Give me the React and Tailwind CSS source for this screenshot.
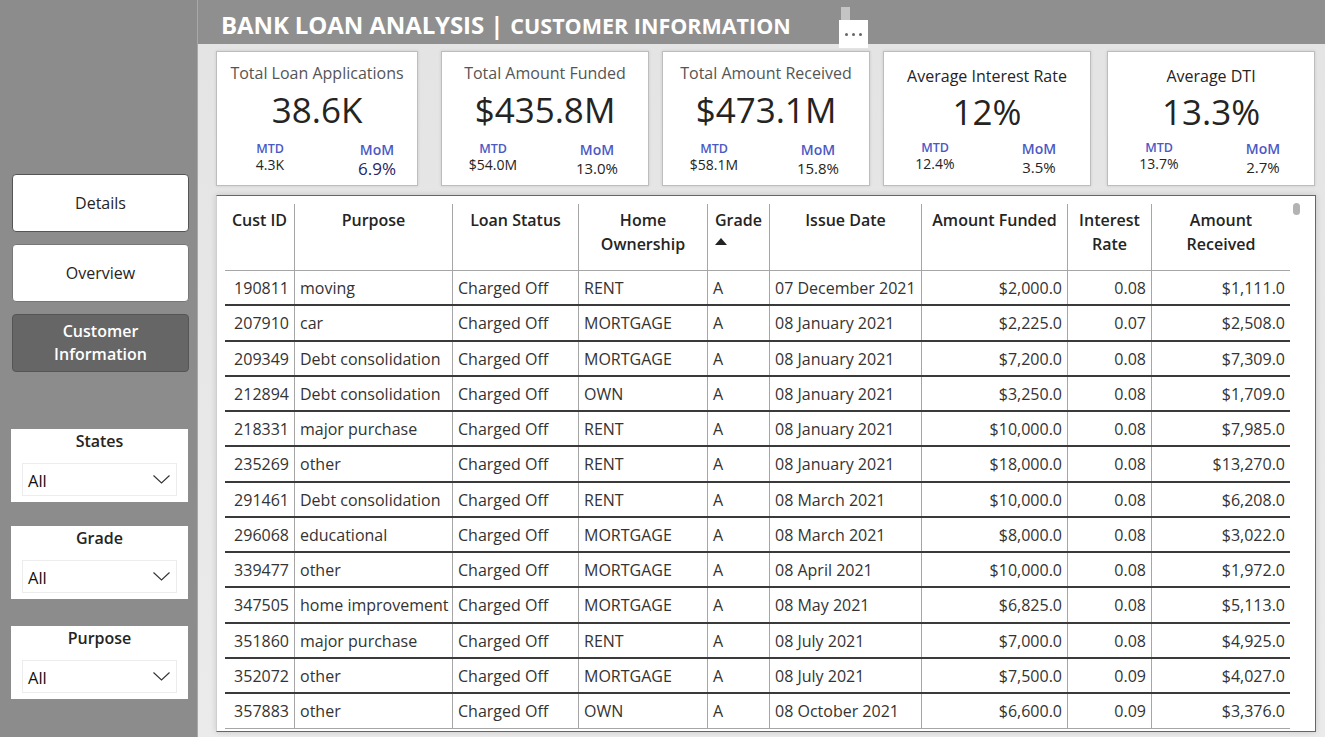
import React from 'react';

const font = { fontFamily: '"Open Sans", "Noto Sans", sans-serif' };

const kpis = [
  { title: 'Total Loan Applications', value: '38.6K', mtd: '4.3K', mom: '6.9%', w: 'w-[202px]', ml: 'ml-0', px: 'pl-[24px] pr-[11px]', titleColor: 'text-[#555555]', momBig: true },
  { title: 'Total Amount Funded', value: '$435.8M', mtd: '$54.0M', mom: '13.0%', w: 'w-[208px]', ml: 'ml-[23px]', px: 'px-[22px]', titleColor: 'text-[#555555]' },
  { title: 'Total Amount Received', value: '$473.1M', mtd: '$58.1M', mom: '15.8%', w: 'w-[208px]', ml: 'ml-[13px]', px: 'px-[22px]', titleColor: 'text-[#555555]' },
  { title: 'Average Interest Rate', value: '12%', mtd: '12.4%', mom: '3.5%', w: 'w-[208px]', ml: 'ml-[13px]', px: 'px-[22px]', titleColor: 'text-[#252423]', low: true },
  { title: 'Average DTI', value: '13.3%', mtd: '13.7%', mom: '2.7%', w: 'w-[208px]', ml: 'ml-[16px]', px: 'px-[22px]', titleColor: 'text-[#252423]', low: true },
];

const rows = [
  ['190811', 'moving', 'RENT', '07 December 2021', '$2,000.0', '0.08', '$1,111.0'],
  ['207910', 'car', 'MORTGAGE', '08 January 2021', '$2,225.0', '0.07', '$2,508.0'],
  ['209349', 'Debt consolidation', 'MORTGAGE', '08 January 2021', '$7,200.0', '0.08', '$7,309.0'],
  ['212894', 'Debt consolidation', 'OWN', '08 January 2021', '$3,250.0', '0.08', '$1,709.0'],
  ['218331', 'major purchase', 'RENT', '08 January 2021', '$10,000.0', '0.08', '$7,985.0'],
  ['235269', 'other', 'RENT', '08 January 2021', '$18,000.0', '0.08', '$13,270.0'],
  ['291461', 'Debt consolidation', 'RENT', '08 March 2021', '$10,000.0', '0.08', '$6,208.0'],
  ['296068', 'educational', 'MORTGAGE', '08 March 2021', '$8,000.0', '0.08', '$3,022.0'],
  ['339477', 'other', 'MORTGAGE', '08 April 2021', '$10,000.0', '0.08', '$1,972.0'],
  ['347505', 'home improvement', 'MORTGAGE', '08 May 2021', '$6,825.0', '0.08', '$5,113.0'],
  ['351860', 'major purchase', 'RENT', '08 July 2021', '$7,000.0', '0.08', '$4,925.0'],
  ['352072', 'other', 'MORTGAGE', '08 July 2021', '$7,500.0', '0.09', '$4,027.0'],
  ['357883', 'other', 'OWN', '08 October 2021', '$6,600.0', '0.09', '$3,376.0'],
];

const cols = 'grid grid-cols-[70px_158px_126px_129px_62px_152px_146px_84px_138px]';

const Chevron = () => (
  <svg width="17" height="9" viewBox="0 0 17 9" fill="none">
    <polyline points="0.5,0.5 8.5,8 16.5,0.5" stroke="#333" strokeWidth="1.1" />
  </svg>
);

const Slicer = ({ label, mt }) => (
  <div className={`${mt} w-[177px] h-[73px] ml-[11px] bg-white`}>
    <div className="text-center text-[16px] font-semibold text-[#252423] leading-[24px]">{label}</div>
    <div className="mx-[11px] mt-[10px] h-[33px] border border-[#ececec] flex items-center justify-between pl-[5px] pr-[6px]">
      <span className="text-[16.5px] text-[#111] pt-[3px]">All</span>
      <Chevron />
    </div>
  </div>
);

const KpiCard = ({ k }) => (
  <div className={`${k.w} ${k.ml} h-[135px] bg-white border border-[#bdbdbd] shadow-[0_0_3px_rgba(0,0,0,0.12)] flex flex-col items-center`}>
    <div className={`${k.low ? 'mt-[12px]' : 'mt-[9px]'} text-[16px] leading-[24px] ${k.titleColor}`}>{k.title}</div>
    <div className={`${k.low ? 'mt-[2px]' : 'mt-[3px]'} text-[35px] leading-[44px] text-[#252423]`}>{k.value}</div>
    <div className={`w-full flex justify-between ${k.px} ${k.low ? 'mt-[7px]' : 'mt-[10px]'}`}>
      <div className="w-[58px] flex flex-col items-center">
        <span className="text-[12.5px] leading-[14px] font-semibold text-[#4b59c5]">MTD</span>
        <span className="text-[14px] leading-[18px] text-[#252423]">{k.mtd}</span>
      </div>
      <div className="w-[58px] flex flex-col items-center">
        <span className="text-[14px] leading-[15px] font-semibold text-[#4b59c5]">MoM</span>
        <span className={`${k.momBig ? 'text-[17px] text-[#25256a] mt-[2px]' : 'text-[15px] text-[#252423] mt-[1px]'} leading-[20px]`}>{k.mom}</span>
      </div>
    </div>
  </div>
);

const HeadCell = ({ children, last, sort }) => (
  <div className={`${last ? '' : 'border-r border-[#a6a6a6]'} px-[4px] pt-[4px] text-center text-[16px] font-semibold leading-[24px] text-[#252423] flex flex-col`}>
    {children}
    {sort && (
      <svg className="mt-[6px] ml-[3px]" width="12" height="7" viewBox="0 0 12 7">
        <polygon points="0,7 6,0 12,7" fill="#252423" />
      </svg>
    )}
  </div>
);

const Cell = ({ children, right, last }) => (
  <div className={`${last ? '' : 'border-r border-[#a6a6a6]'} ${right ? 'text-right pr-[5px]' : 'pl-[5px]'} pt-[2px] text-[16px] text-[#333] leading-[31px] whitespace-nowrap overflow-hidden`}>
    {children}
  </div>
);

export default function App() {
  return (
    <div className="w-[1325px] h-[737px] flex overflow-hidden bg-[#e6e6e6]" style={font}>
      {/* Sidebar */}
      <div className="w-[198px] h-full bg-[#8c8c8c] border-r border-[#a8a8a8] flex flex-col">
        <button className="mt-[174px] ml-[12px] w-[177px] h-[58px] bg-white border border-[#555] rounded-[4px] text-[16px] text-[#252423]">
          Details
        </button>
        <button className="mt-[12px] ml-[12px] w-[177px] h-[58px] bg-white border border-[#777] rounded-[4px] text-[16px] text-[#252423]">
          Overview
        </button>
        <button className="mt-[12px] ml-[12px] w-[177px] h-[58px] bg-[#666666] border border-[#555] rounded-[4px] text-[16px] font-semibold leading-[23px] text-white">
          Customer<br />Information
        </button>
        <Slicer label="States" mt="mt-[57px]" />
        <Slicer label="Grade" mt="mt-[24px]" />
        <Slicer label="Purpose" mt="mt-[27px]" />
      </div>

      {/* Main */}
      <div className="flex-1 flex flex-col">
        <div className="h-[44px] bg-[#8f8f8f] flex items-center pl-[23px] relative">
          <span className="text-white font-bold text-[24px] tracking-[-0.1px] pt-[6px]">BANK LOAN ANALYSIS |</span>
          <span className="text-white font-bold text-[21.5px] ml-[7px] pt-[8px]">CUSTOMER INFORMATION</span>
          <div className="absolute left-[643px] top-[7px] w-[9px] h-[14px] bg-[#c4c4c4]" />
          <div className="absolute left-[641px] top-[20px] w-[29px] h-[28px] bg-white flex items-center justify-center gap-[4px] z-10">
            <span className="w-[3px] h-[3px] rounded-full bg-[#666]" />
            <span className="w-[3px] h-[3px] rounded-full bg-[#666]" />
            <span className="w-[3px] h-[3px] rounded-full bg-[#666]" />
          </div>
        </div>

        <div className="flex-1 bg-gradient-to-b from-[#e4e4e4] to-[#ebebeb] pl-[18px] pr-[9px] pt-[7px]">
          <div className="flex">
            {kpis.map((k) => (
              <KpiCard key={k.title} k={k} />
            ))}
          </div>

          <div className="mt-[9px] w-[1100px] h-[537px] bg-white border border-[#666] border-l-[#cfcfcf] shadow-[0_0_6px_rgba(0,0,0,0.15)] relative pl-[8px] pt-[8px]">
            <div className="absolute right-[15px] top-[7px] w-[7px] h-[12px] rounded-full bg-[#b3b3b3]" />
            <div className="w-[1065px]">
              <div className={`${cols} h-[67px] border-b border-[#a6a6a6]`}>
                <HeadCell>Cust ID</HeadCell>
                <HeadCell>Purpose</HeadCell>
                <HeadCell>Loan Status</HeadCell>
                <HeadCell>Home<br />Ownership</HeadCell>
                <HeadCell sort>Grade</HeadCell>
                <HeadCell>Issue Date</HeadCell>
                <HeadCell>Amount Funded</HeadCell>
                <HeadCell>Interest<br />Rate</HeadCell>
                <HeadCell last>Amount<br />Received</HeadCell>
              </div>
              {rows.map((r, i) => (
                <div
                  key={r[0]}
                  className={`${cols} h-[35.25px] ${i === rows.length - 1 ? 'border-b border-[#a6a6a6]' : 'border-b-2 border-[#3a3a3a]'}`}
                >
                  <Cell right>{r[0]}</Cell>
                  <Cell>{r[1]}</Cell>
                  <Cell>Charged Off</Cell>
                  <Cell>{r[2]}</Cell>
                  <Cell>A</Cell>
                  <Cell>{r[3]}</Cell>
                  <Cell right>{r[4]}</Cell>
                  <Cell right>{r[5]}</Cell>
                  <Cell right last>{r[6]}</Cell>
                </div>
              ))}
            </div>
          </div>
        </div>
      </div>
    </div>
  );
}
